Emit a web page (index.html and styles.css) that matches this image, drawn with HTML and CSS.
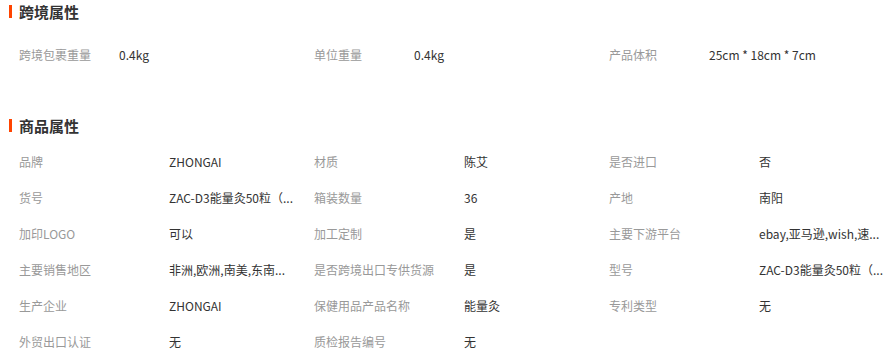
FILE: index.html
```html
<!DOCTYPE html>
<html lang="zh">
<head>
<meta charset="utf-8">
<link rel="stylesheet" href="styles.css">
</head>
<body>
<div class="page">
  <section class="sec sec-first">
    <h2 class="title">跨境属性</h2>
    <div class="grid grid-narrow">
      <div class="item"><span class="label">跨境包裹重量</span><span class="value">0.4kg</span></div>
      <div class="item"><span class="label">单位重量</span><span class="value">0.4kg</span></div>
      <div class="item"><span class="label">产品体积</span><span class="value">25cm * 18cm * 7cm</span></div>
    </div>
  </section>
  <section class="sec sec-second">
    <h2 class="title">商品属性</h2>
    <div class="grid grid-wide">
      <div class="item"><span class="label">品牌</span><span class="value">ZHONGAI</span></div>
      <div class="item"><span class="label">材质</span><span class="value">陈艾</span></div>
      <div class="item"><span class="label">是否进口</span><span class="value">否</span></div>
      <div class="item"><span class="label">货号</span><span class="value">ZAC-D3能量灸50粒（...</span></div>
      <div class="item"><span class="label">箱装数量</span><span class="value">36</span></div>
      <div class="item"><span class="label">产地</span><span class="value">南阳</span></div>
      <div class="item"><span class="label">加印LOGO</span><span class="value">可以</span></div>
      <div class="item"><span class="label">加工定制</span><span class="value">是</span></div>
      <div class="item"><span class="label">主要下游平台</span><span class="value">ebay,亚马逊,wish,速...</span></div>
      <div class="item"><span class="label">主要销售地区</span><span class="value">非洲,欧洲,南美,东南...</span></div>
      <div class="item"><span class="label">是否跨境出口专供货源</span><span class="value">是</span></div>
      <div class="item"><span class="label">型号</span><span class="value">ZAC-D3能量灸50粒（...</span></div>
      <div class="item"><span class="label">生产企业</span><span class="value">ZHONGAI</span></div>
      <div class="item"><span class="label">保健用品产品名称</span><span class="value">能量灸</span></div>
      <div class="item"><span class="label">专利类型</span><span class="value">无</span></div>
      <div class="item"><span class="label">外贸出口认证</span><span class="value">无</span></div>
      <div class="item"><span class="label">质检报告编号</span><span class="value">无</span></div>
    </div>
  </section>
</div>
</body>
</html>
```

FILE: styles.css
```css
html, body {
  margin: 0;
  padding: 0;
  background: #fff;
}
body {
  font-family: "Noto Sans CJK SC", "Noto Sans", sans-serif;
  font-size: 12px;
  color: #333;
}
.page {
  padding-left: 9px;
  width: 885px;
}
.title {
  margin: 0;
  height: 22px;
  display: flex;
  align-items: center;
  font-size: 15px;
  font-weight: bold;
  color: #333;
  line-height: 15px;
}
.title::before {
  content: "";
  display: block;
  width: 3px;
  height: 13px;
  background: #ff4400;
  margin-right: 7px;
}
.grid {
  display: grid;
  grid-template-columns: 295px 295px 295px;
}
.item {
  display: flex;
  align-items: center;
  height: 36px;
  padding-left: 10px;
  white-space: nowrap;
}
.label {
  color: #999;
  flex: none;
}
.value {
  color: #333;
  white-space: nowrap;
}
.grid-narrow .label { width: 100px; }
.grid-narrow { padding-top: 14px; }
.grid-wide .label { width: 150px; }
.sec-second { margin-top: 42px; }
.grid-wide { padding-top: 7px; }
```
